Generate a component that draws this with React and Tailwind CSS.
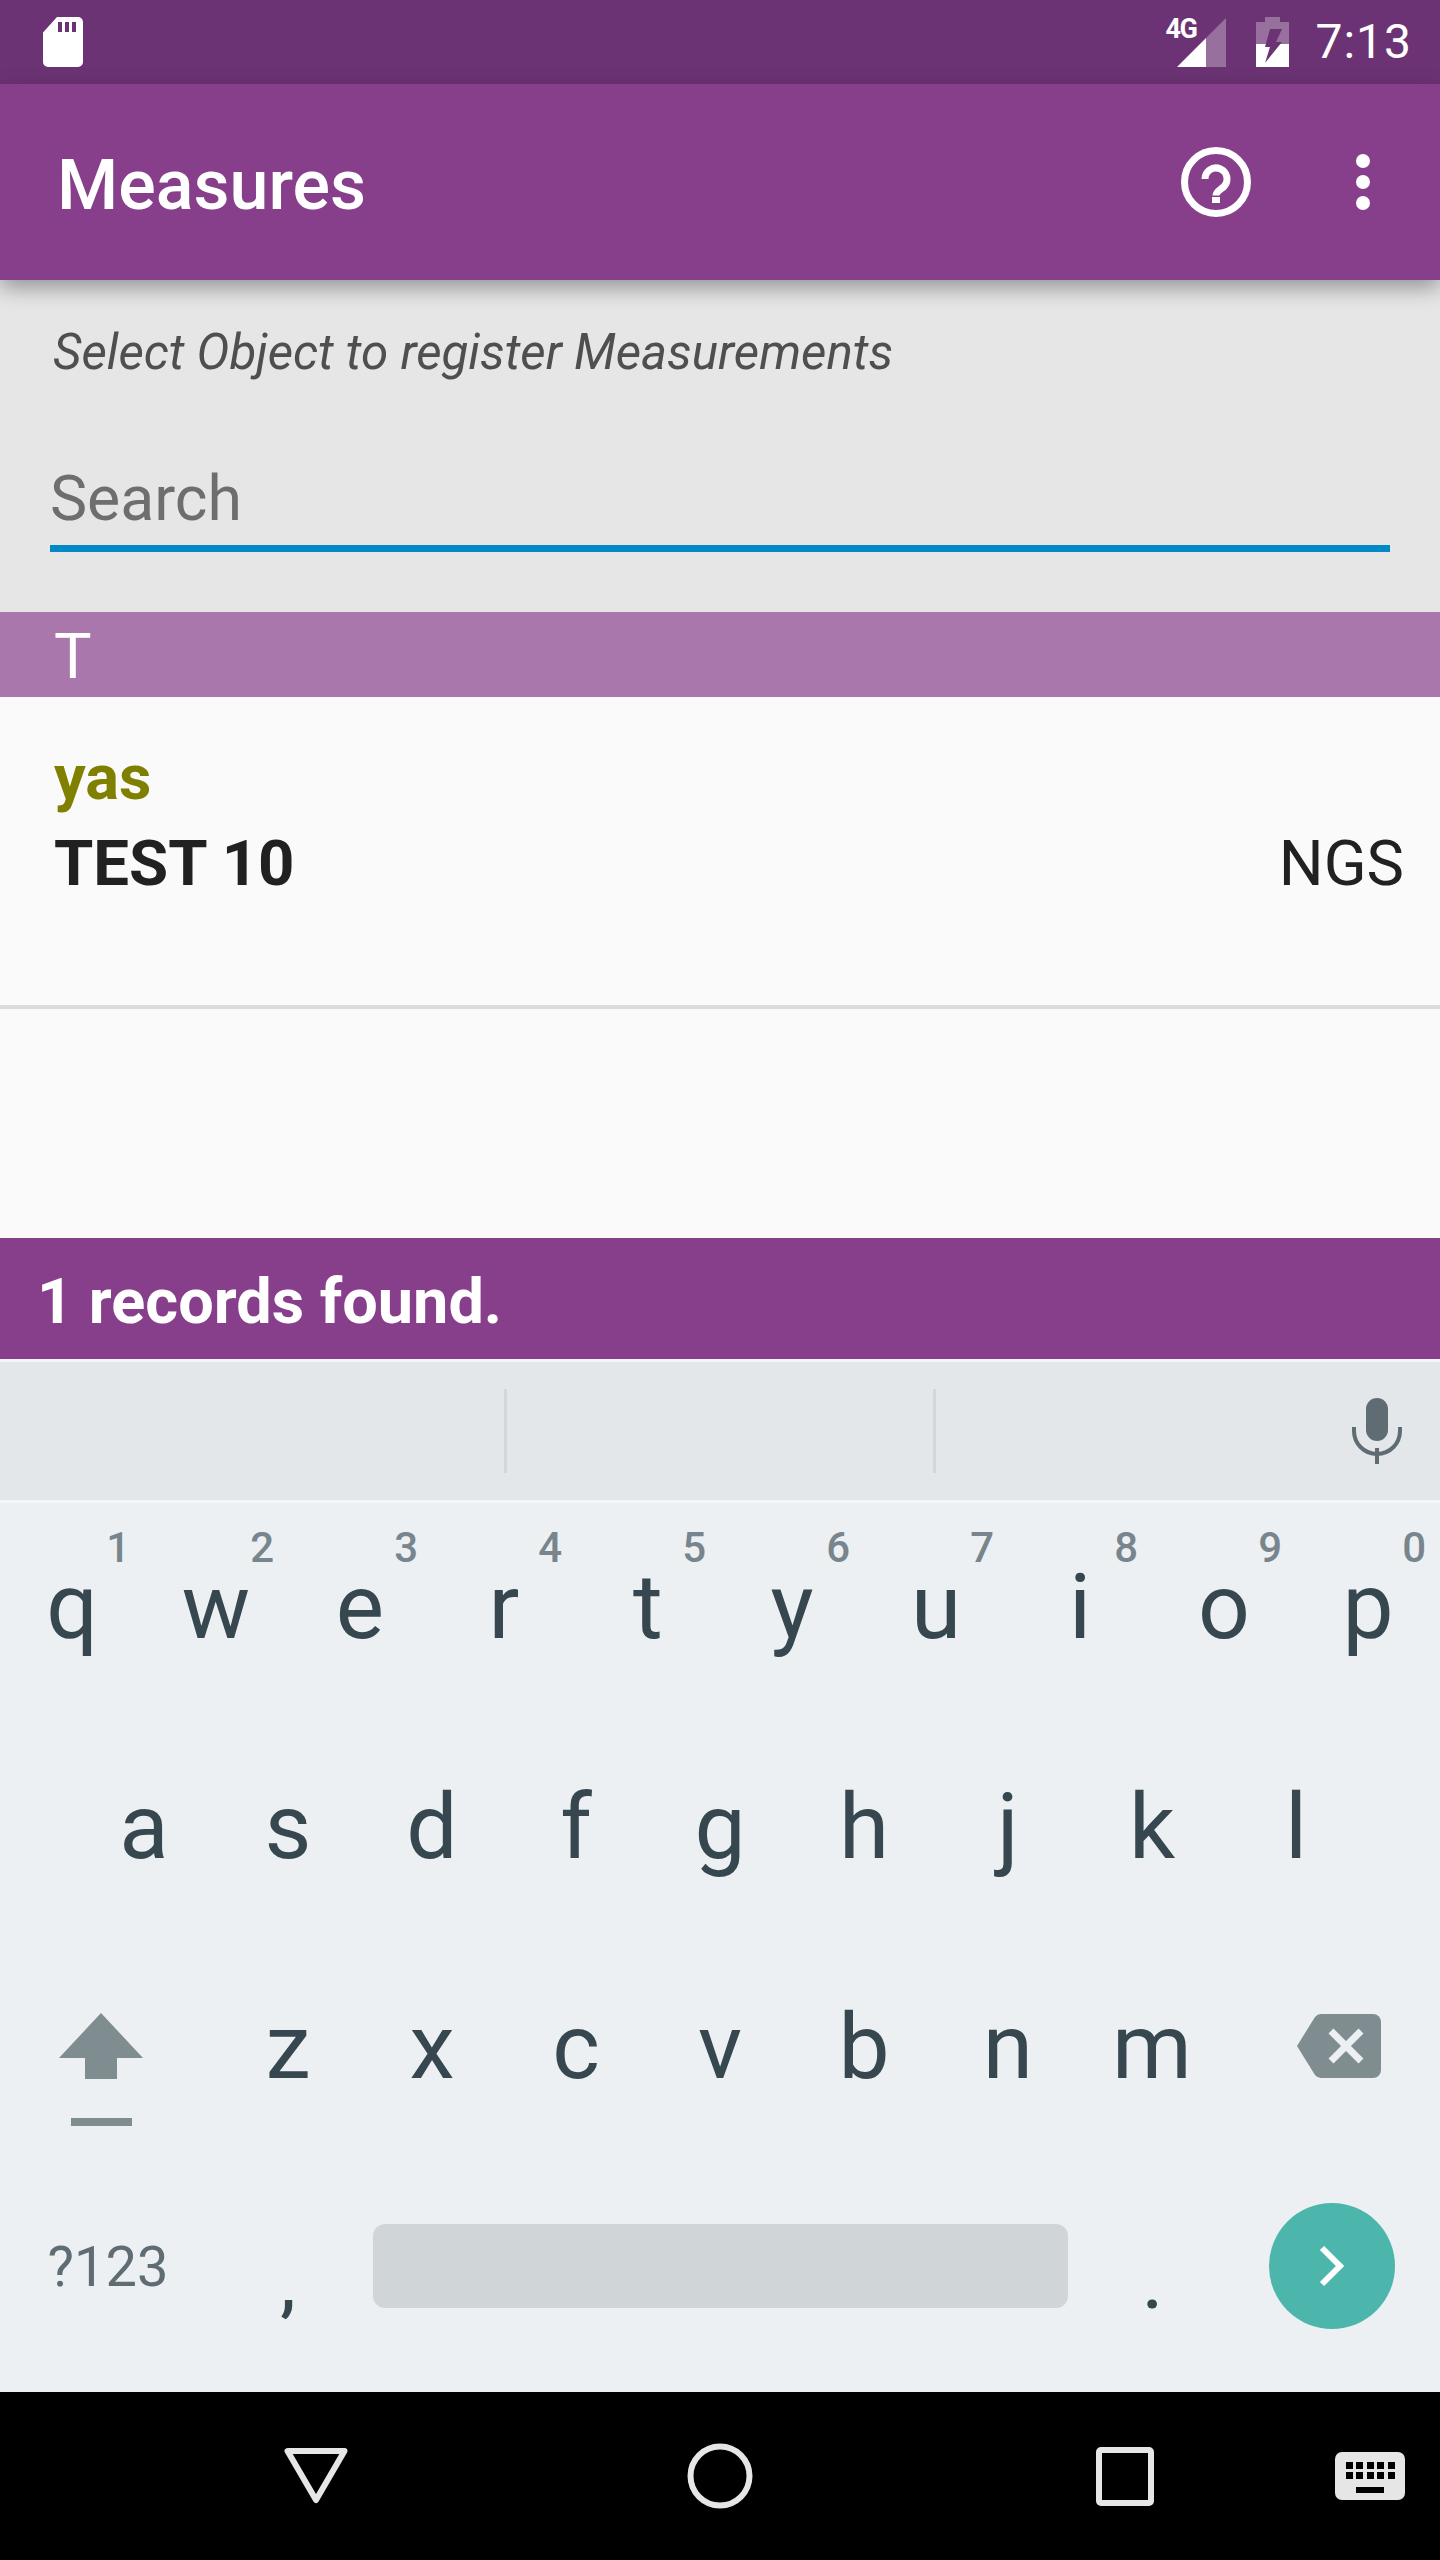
import React from 'react';

const rowOne = [
  ['q', '1'], ['w', '2'], ['e', '3'], ['r', '4'], ['t', '5'],
  ['y', '6'], ['u', '7'], ['i', '8'], ['o', '9'], ['p', '0'],
];
const rowTwo = ['a', 's', 'd', 'f', 'g', 'h', 'j', 'k', 'l'];
const rowThree = ['z', 'x', 'c', 'v', 'b', 'n', 'm'];

const Key = ({ label, hint }) => (
  <div className="relative flex h-full w-[144px] items-center justify-center pb-[11px] text-[91px] leading-none text-[#37474f]">
    {label}
    {hint && (
      <span className="absolute right-[14px] top-[24px] text-[42px] font-medium leading-none text-[#78858c]">
        {hint}
      </span>
    )}
  </div>
);

const StatusBar = () => (
  <div className="flex h-[84px] items-center justify-between bg-[#6b3374] pl-[43px] pr-[28px]">
    <svg width="40" height="50" viewBox="0 0 40 50">
      <path
        fill="#fff"
        fillRule="evenodd"
        d="M14 0H35a5 5 0 0 1 5 5V45a5 5 0 0 1-5 5H5a5 5 0 0 1-5-5V15.5ZM15 5V15H19V5ZM22 5V15H26V5ZM29 5V15H33V5Z"
      />
    </svg>
    <div className="flex items-center">
      <div className="relative mr-[30px] h-[50px] w-[61px]">
        <svg width="49" height="49" viewBox="0 0 49 49" className="absolute bottom-0 right-0">
          <path fill="#fff" fillOpacity="0.3" d="M49 0V49H29V20Z" />
          <path fill="#fff" d="M29 20V49H0Z" />
        </svg>
        <span className="absolute left-0 top-[-1px] text-[27px] font-bold leading-[26px] tracking-[-1.5px] text-white">
          4G
        </span>
      </div>
      <svg width="33" height="50" viewBox="0 0 33 50" className="mr-[26px]">
        <path fill="#fff" fillOpacity="0.3" d="M9 0H24V5H33V27H0V5H9Z" />
        <path fill="#fff" d="M0 27H33V50H0Z" />
        <path fill="#6b3374" d="M14 12H26L20 25H26L9 46L14 30H9Z" />
      </svg>
      <span className="text-[48px] leading-none tracking-[1px] text-white">7:13</span>
    </div>
  </div>
);

const AppBar = () => (
  <div className="relative z-10 flex h-[196px] items-center justify-between bg-[#873f8b] pl-[57px] pr-[70px] shadow-[0_8px_20px_rgba(0,0,0,0.35)]">
    <h1 className="pt-[6px] text-[70px] font-medium leading-none text-white">Measures</h1>
    <div className="flex items-center gap-[105px]">
      <svg width="70" height="70" viewBox="0 0 70 70">
        <circle cx="35" cy="35" r="31.5" fill="none" stroke="#fff" strokeWidth="7" />
        <path d="M24 32a11 11 0 1 1 19 7.5c-4 3.5-8 5-8 9" fill="none" stroke="#fff" strokeWidth="7" />
        <rect x="31" y="50" width="8" height="6" fill="#fff" />
      </svg>
      <svg width="14" height="56" viewBox="0 0 14 56">
        <circle cx="7" cy="7" r="7" fill="#fff" />
        <circle cx="7" cy="28" r="7" fill="#fff" />
        <circle cx="7" cy="49" r="7" fill="#fff" />
      </svg>
    </div>
  </div>
);

const SearchArea = () => (
  <div className="h-[332px] bg-[#e6e6e6] px-[50px]">
    <p className="pl-[3px] pt-[42px] text-[49.3px] italic leading-[60px] text-[#4f4f4f]">
      Select Object to register Measurements
    </p>
    <div className="mt-[81px] h-[89px] border-b-[7px] border-[#0288c4] text-[62.5px] leading-[72px] text-[#6e6e6e]">
      Search
    </div>
  </div>
);

const Results = () => (
  <>
    <div className="h-[85px] bg-[#a977ab] pl-[54px] text-[63px] leading-[90px] text-white">T</div>
    <div className="h-[312px] border-b-[4px] border-[#dcdcdc] bg-[#fafafa] pl-[54px] pr-[36px]">
      <div className="pt-[49px] text-[63px] font-bold leading-[64px] text-[#808000]">yas</div>
      <div className="mt-[22px] flex items-baseline justify-between leading-[64px]">
        <span className="text-[63.5px] font-bold text-[#212121]">TEST 10</span>
        <span className="text-[63px] text-[#212121]">NGS</span>
      </div>
    </div>
    <div className="h-[229px] bg-[#fafafa]" />
    <div className="h-[121px] bg-[#873f8b] pl-[37px] text-[63px] font-bold leading-[128px] text-white">
      1 records found.
    </div>
  </>
);

const Suggestions = () => (
  <div className="flex h-[144px] items-center border-y-[3px] border-[#f3f5f7] bg-[#e3e7ea]">
    <div className="ml-[504px] h-[84px] w-[3px] bg-[#d3d7da]" />
    <div className="ml-[426px] h-[84px] w-[3px] bg-[#d3d7da]" />
    <svg width="50" height="66" viewBox="0 0 50 66" className="ml-[416px]">
      <rect x="14" y="0" width="22" height="43" rx="11" fill="#5f6c73" />
      <path d="M2 29v4a23 23 0 0 0 46 0v-4" fill="none" stroke="#5f6c73" strokeWidth="4" />
      <rect x="23" y="50" width="4" height="16" fill="#5f6c73" />
    </svg>
  </div>
);

const Keyboard = () => (
  <div className="bg-[#ecf0f3] pb-[23px]">
    <div className="flex h-[220px]">
      {rowOne.map(([label, hint]) => (
        <Key key={label} label={label} hint={hint} />
      ))}
    </div>
    <div className="flex h-[220px] justify-center">
      {rowTwo.map((label) => (
        <Key key={label} label={label} />
      ))}
    </div>
    <div className="flex h-[220px]">
      <div className="w-[216px] pl-[59px] pt-[70px]">
        <svg width="84" height="113" viewBox="0 0 84 113">
          <path fill="#7f8c90" d="M42 0L84 45H58V66H26V45H0Z" />
          <rect x="12" y="105" width="61" height="8" fill="#7f8c90" />
        </svg>
      </div>
      {rowThree.map((label) => (
        <Key key={label} label={label} />
      ))}
      <div className="w-[216px] pl-[73px] pt-[71px]">
        <svg width="84" height="64" viewBox="0 0 84 64">
          <path
            fill="#7f8c90"
            d="M24 0H76a8 8 0 0 1 8 8V56a8 8 0 0 1-8 8H24a8 8 0 0 1-6-3L0 32L18 3a8 8 0 0 1 6-3Z"
          />
          <path stroke="#ecf0f3" strokeWidth="7" d="M34 17L64 47M64 17L34 47" />
        </svg>
      </div>
    </div>
    <div className="flex h-[206px] items-center">
      <div className="w-[216px] pt-[2px] text-center text-[56px] leading-none text-[#5f6c73]">?123</div>
      <div className="w-[144px] pt-[36px] text-center text-[70px] font-medium leading-none text-[#37474f]">,</div>
      <div className="flex w-[720px] justify-center">
        <div className="h-[84px] w-[695px] rounded-[12px] bg-[#d0d5d8]" />
      </div>
      <div className="w-[144px] pl-[1px] pt-[36px] text-center text-[70px] font-medium leading-none text-[#37474f]">.</div>
      <div className="flex w-[216px] justify-center">
        <div className="flex h-[126px] w-[126px] items-center justify-center rounded-full bg-[#4db6ac]">
          <svg width="28" height="42" viewBox="0 0 28 42">
            <path d="M4 3L22 21L4 39" fill="none" stroke="#fff" strokeWidth="6" />
          </svg>
        </div>
      </div>
    </div>
  </div>
);

const NavBar = () => (
  <div className="flex h-[168px] items-center bg-black pl-[284px]">
    <svg width="64" height="56" viewBox="0 0 64 56">
      <path d="M3.5 3H60.5L32 52Z" fill="none" stroke="#e6e6e6" strokeWidth="6" strokeLinejoin="round" />
    </svg>
    <svg width="66" height="66" viewBox="0 0 66 66" className="ml-[339px]">
      <circle cx="33" cy="33" r="29.5" fill="none" stroke="#e6e6e6" strokeWidth="6" />
    </svg>
    <svg width="58" height="59" viewBox="0 0 58 59" className="ml-[343px]">
      <rect x="3" y="3" width="52" height="53" rx="2" fill="none" stroke="#e6e6e6" strokeWidth="6" />
    </svg>
    <svg width="70" height="48" viewBox="0 0 70 48" className="ml-[181px]">
      <path
        fill="#e6e6e6"
        fillRule="evenodd"
        d="M7 0H63a7 7 0 0 1 7 7V41a7 7 0 0 1-7 7H7a7 7 0 0 1-7-7V7a7 7 0 0 1 7-7ZM11 10V17H18V10ZM21 10V17H28V10ZM32 10V17H39V10ZM42 10V17H49V10ZM53 10V17H60V10ZM11 20V27H18V20ZM21 20V27H28V20ZM32 20V27H39V20ZM42 20V27H49V20ZM53 20V27H60V20ZM21 35V41H49V35Z"
      />
    </svg>
  </div>
);

export default function App() {
  return (
    <div className="h-[2560px] w-[1440px] overflow-hidden [font-family:Roboto,sans-serif]">
      <StatusBar />
      <AppBar />
      <SearchArea />
      <Results />
      <Suggestions />
      <Keyboard />
      <NavBar />
    </div>
  );
}
